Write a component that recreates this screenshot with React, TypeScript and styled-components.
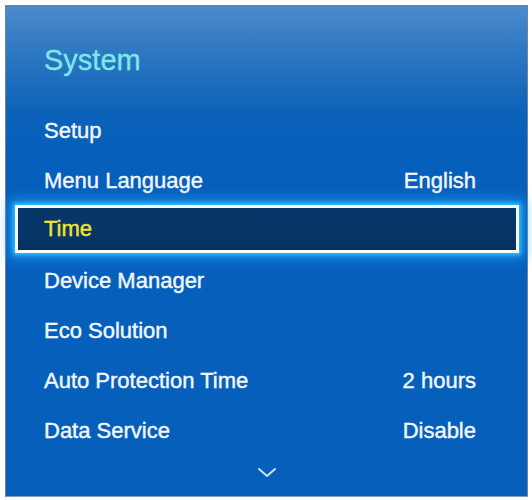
import React, { FC } from 'react';
import styled, { createGlobalStyle } from 'styled-components';

const GlobalStyle = createGlobalStyle`
  html, body {
    margin: 0;
    padding: 0;
    background: #ffffff;
  }
  body {
    font-family: 'Liberation Sans', Arial, sans-serif;
  }
`;

const Page = styled.div`
  width: 532px;
  height: 500px;
  padding: 5px 4px 3px 5px;
  box-sizing: border-box;
`;

const Panel = styled.div`
  height: 100%;
  box-sizing: border-box;
  border: 1px solid #6f8499;
  border-bottom-color: #7f9dbd;
  background: linear-gradient(
    to bottom,
    #4b8bcb 0px,
    #2f78c2 45px,
    #0d62b9 105px,
    #0660bb 140px,
    #0660bb 100%
  );
  display: flex;
  flex-direction: column;
`;

const Header = styled.div`
  height: 100px;
  box-sizing: border-box;
  padding: 36px 0 0 38px;
  font-size: 29px;
  line-height: 36px;
  color: #7ce9e6;
  -webkit-text-stroke: 0.3px #7ce9e6;
`;

const List = styled.div`
  display: flex;
  flex-direction: column;
`;

const Row = styled.div<{ $selected?: boolean }>`
  display: flex;
  align-items: center;
  justify-content: space-between;
  box-sizing: border-box;
  height: ${(p) => (p.$selected ? '48px' : '50px')};
  margin: ${(p) => (p.$selected ? '-1px 8px 3px 9px' : '0')};
  padding: ${(p) => (p.$selected ? '0 40px 0 26px' : '0 51px 0 38px')};
  font-size: 22px;
  color: ${(p) => (p.$selected ? '#f2e62a' : '#f4f8fd')};
  -webkit-text-stroke: 0.4px ${(p) => (p.$selected ? '#f2e62a' : '#f4f8fd')};
  background: ${(p) =>
    p.$selected ? 'linear-gradient(to bottom, #073668 0%, #073565 70%, #05305d 100%)' : 'transparent'};
  border: ${(p) => (p.$selected ? '3px solid #f6fbff' : 'none')};
  box-shadow: ${(p) =>
    p.$selected ? '0 0 4px 2px #2ec0ff, 0 0 12px 5px rgba(30, 160, 255, 0.75)' : 'none'};
  position: relative;
  z-index: ${(p) => (p.$selected ? 1 : 0)};
`;

const Value = styled.span`
  color: #f4f8fd;
  -webkit-text-stroke: 0.4px #f4f8fd;
`;

const More = styled.div`
  height: 28px;
  display: flex;
  justify-content: center;
  align-items: center;
  padding-top: 2px;
`;

interface Item {
  label: string;
  value?: string;
}

const items: Item[] = [
  { label: 'Setup' },
  { label: 'Menu Language', value: 'English' },
  { label: 'Time' },
  { label: 'Device Manager' },
  { label: 'Eco Solution' },
  { label: 'Auto Protection Time', value: '2 hours' },
  { label: 'Data Service', value: 'Disable' },
];

const Chevron: FC = () => (
  <svg width="20" height="11" viewBox="0 0 20 11">
    <path d="M2 2 L10 9 L18 2" fill="none" stroke="#cfe3f7" strokeWidth="2" strokeLinecap="round" strokeLinejoin="round" />
  </svg>
);

const App: FC = () => {
  const selected = 'Time';
  return (
    <>
      <GlobalStyle />
      <Page>
        <Panel>
          <Header>System</Header>
          <List>
            {items.map((item) => (
              <Row key={item.label} $selected={item.label === selected}>
                <span>{item.label}</span>
                {item.value && <Value>{item.value}</Value>}
              </Row>
            ))}
          </List>
          <More>
            <Chevron />
          </More>
        </Panel>
      </Page>
    </>
  );
};

export default App;
